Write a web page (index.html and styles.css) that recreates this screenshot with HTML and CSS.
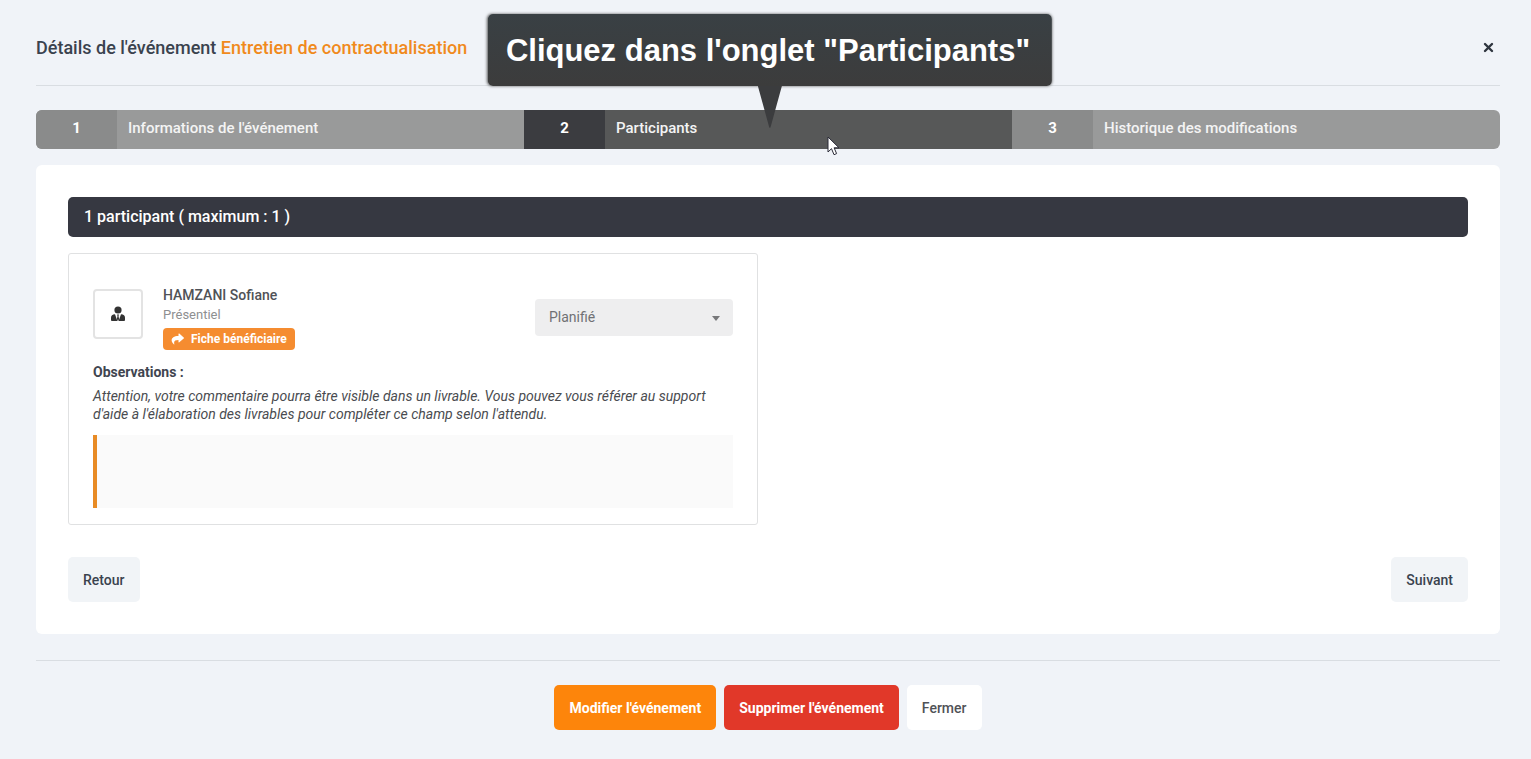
FILE: index.html
```
<!DOCTYPE html>
<html lang="fr">
<head>
    <meta charset="UTF-8">
    <meta name="viewport" content="width=device-width, initial-scale=1.0">
    <title>Détails de l'événement</title>
    <link rel="stylesheet" href="styles.css">
</head>
<body>
    <div class="modal">
        <header class="modal-header">
            <h1>Détails de l'événement <span>Entretien de contractualisation</span></h1>
            <button type="button" class="close" aria-label="Fermer la fenêtre">
                <svg width="11" height="11" viewBox="0 0 11 11"><path d="M2 2l7 7M9 2l-7 7" stroke="#2f353f" stroke-width="2.4" stroke-linecap="round"/></svg>
            </button>
        </header>

        <nav class="steps">
            <a href="#informations" class="step"><span class="num">1</span><span class="label">Informations de l'événement</span></a>
            <div class="step-current">
                <a href="#participants" class="step active"><span class="num">2</span><span class="label">Participants</span></a>
                <div class="callout">
                    Cliquez dans l'onglet "Participants"
                    <svg class="callout-tip" width="24" height="44" viewBox="0 0 24 44"><path d="M0 0h24L13 40q-1 4-2 0z" fill="#3b3c3e"/></svg>
                </div>
                <svg class="cursor" width="13" height="20" viewBox="0 0 13 20"><path d="M1 1v15l3.5-3.3 2.5 6 2.6-1.1-2.5-5.8H12z" fill="#fff" stroke="#2b2b38" stroke-width="1"/></svg>
            </div>
            <a href="#historique" class="step"><span class="num">3</span><span class="label">Historique des modifications</span></a>
        </nav>

        <main class="panel" id="participants">
            <h2 class="panel-title">1 participant ( maximum : 1 )</h2>

            <section class="card">
                <div class="participant">
                    <div class="avatar">
                        <svg width="14" height="16" viewBox="0 0 14 16" fill="#333"><circle cx="7" cy="4" r="3.6"/><path d="M4 8.2L6.400 15H.9q-.9 0-.9-.9v-2.300q0-3.400 4-3.600zM10 8.200L7.600 15h5.500q.9 0 .9-.9v-2.300q0-3.400-4-3.600zM6 8.400h2l-.5 1.600.6 3L7 15l-1.100-2 .6-3z"/></svg>
                    </div>
                    <div class="identity">
                        <div class="name">HAMZANI Sofiane</div>
                        <div class="mode">Présentiel</div>
                        <a href="#fiche" class="badge">
                            <svg width="13" height="12" viewBox="0 0 13 12"><path d="M7.500 1q0-.9.8-.4l4.400 3.800q.6.500 0 1L8.300 9.200q-.8.500-.8-.4V6.900C4 6.900 2.600 7.900 3.300 11q.1.800-.5.300C-1.200 7.500.3 3 7.500 2.900z" fill="#fff"/></svg>
                            Fiche bénéficiaire
                        </a>
                    </div>
                    <div class="status">
                        <select aria-label="Statut">
                            <option>Planifié</option>
                            <option>Présent</option>
                            <option>Absent</option>
                        </select>
                    </div>
                </div>

                <label class="obs-label" for="observations">Observations :</label>
                <p class="obs-help">Attention, votre commentaire pourra être visible dans un livrable. Vous pouvez vous référer au support d'aide à l'élaboration des livrables pour compléter ce champ selon l'attendu.</p>
                <textarea id="observations"></textarea>
            </section>

            <div class="panel-actions">
                <button type="button" class="btn btn-light">Retour</button>
                <button type="button" class="btn btn-light">Suivant</button>
            </div>
        </main>

        <footer class="modal-footer">
            <button type="button" class="btn btn-edit">Modifier l'événement</button>
            <button type="button" class="btn btn-delete">Supprimer l'événement</button>
            <button type="button" class="btn btn-close">Fermer</button>
        </footer>
    </div>
</body>
</html>
```
FILE: styles.css
```
* {
    box-sizing: border-box;
}
body {
    margin: 0;
    background-color: #f0f3f8;
    color: #3f4550;
    font-family: Roboto, Arial, sans-serif;
    font-size: 14px;
    line-height: 20px;
}
button, select, textarea {
    font-family: inherit;
    font-size: 14px;
}
button {
    cursor: pointer;
}
a {
    text-decoration: none;
}
.modal {
    padding: 10px 31px 29px 36px;
}

/* header */
.modal-header {
    display: flex;
    justify-content: space-between;
    align-items: center;
    height: 76px;
    border-bottom: 1px solid #d9dde2;
}
.modal-header h1 {
    margin: 0;
    font-size: 18px;
    font-weight: 500;
    color: #3a424e;
}
.modal-header h1 span {
    color: #f08a1d;
}
.close {
    display: flex;
    padding: 6px;
    border: none;
    background: none;
}

/* steps */
.steps {
    display: grid;
    grid-template-columns: repeat(3, 1fr);
    margin: 24px 0 16px;
}
.step {
    display: flex;
    height: 39px;
    line-height: 37px;
    background-color: #999a9a;
    color: #fff;
    font-size: 15px;
    font-weight: 500;
}
.step .num {
    width: 81px;
    background-color: #8a8b8b;
    text-align: center;
    font-weight: 700;
}
.step .label {
    padding-left: 11px;
    color: #f4f4f4;
}
.step:first-child {
    border-radius: 6px 0 0 6px;
    overflow: hidden;
}
.step:last-child {
    border-radius: 0 6px 6px 0;
}
.step.active {
    border-radius: 0;
    background-color: #575858;
}
.step.active .num {
    background-color: #3b3c40;
}
.step-current {
    position: relative;
}
.callout {
    position: absolute;
    bottom: calc(100% + 24px);
    left: calc(50% + 2px);
    transform: translateX(-50%);
    padding: 2px 22px 0 18px;
    border-radius: 5px;
    background: linear-gradient(#394044, #3c3c3c);
    box-shadow: 0 0 3px #555;
    color: #fff;
    font-family: "Liberation Sans", Arial, sans-serif;
    font-size: 31px;
    font-weight: 700;
    line-height: 70px;
    white-space: nowrap;
}
.callout-tip {
    position: absolute;
    top: 100%;
    left: calc(50% - 12px);
}
.cursor {
    position: absolute;
    top: 26px;
    left: 62%;
}

/* panel */
.panel {
    padding: 32px;
    border-radius: 6px;
    background-color: #fff;
}
.panel-title {
    margin: 0 0 16px;
    padding: 0 16px;
    border-radius: 5px;
    background-color: #363841;
    color: #fff;
    font-size: 16px;
    font-weight: 500;
    line-height: 40px;
}
.card {
    width: calc(50% - 10px);
    padding: 31px 24px 16px;
    border: 1px solid #e0e1e2;
    border-radius: 3px;
}
.participant {
    display: flex;
    align-items: center;
    gap: 20px;
}
.avatar {
    display: flex;
    justify-content: center;
    align-items: center;
    width: 50px;
    height: 50px;
    margin-bottom: 8px;
    border: 2px solid #e3e3e3;
    border-radius: 4px;
}
.identity {
    flex: 1;
}
.name {
    color: #505257;
    font-weight: 500;
}
.mode {
    color: #8e8f91;
    font-size: 13px;
}
.badge {
    display: inline-flex;
    align-items: center;
    gap: 7px;
    height: 22px;
    margin-top: 3px;
    padding: 0 8px;
    border-radius: 4px;
    background-color: #f58c30;
    color: #fff;
    font-size: 12px;
    font-weight: 700;
    vertical-align: top;
}
.status {
    position: relative;
    width: 198px;
}
.status select {
    width: 100%;
    height: 37px;
    padding: 0 14px 2px;
    border: none;
    border-radius: 4px;
    background-color: #eeeeef;
    color: #707174;
    appearance: none;
}
.status::after {
    content: "";
    position: absolute;
    top: 17px;
    right: 13px;
    border: 4px solid transparent;
    border-top: 5px solid #77787a;
    border-bottom: none;
    pointer-events: none;
}
.obs-label {
    display: block;
    margin-top: 12px;
    font-weight: 700;
}
.obs-help {
    margin: 5px 0 12px;
    color: #4a4c50;
    font-style: italic;
    line-height: 18px;
}
textarea {
    display: block;
    width: 100%;
    height: 73px;
    padding: 10px;
    border: none;
    border-left: 4px solid #e88b25;
    background-color: #fafafa;
    resize: none;
}
.panel-actions {
    display: flex;
    justify-content: space-between;
    margin-top: 32px;
}

/* buttons */
.btn {
    height: 45px;
    padding: 0 15px;
    border: none;
    border-radius: 5px;
    font-weight: 500;
}
.btn-light {
    background-color: #f1f4f7;
    color: #3a424e;
}
.btn-edit {
    background-color: #fd850b;
    color: #fff;
    font-weight: 700;
}
.btn-delete {
    background-color: #e13829;
    color: #fff;
    font-weight: 700;
}
.btn-close {
    background-color: #fff;
    color: #505257;
}
.modal-footer {
    display: flex;
    justify-content: center;
    gap: 8px;
    margin-top: 26px;
    padding-top: 24px;
    border-top: 1px solid #d9dde2;
}
```
